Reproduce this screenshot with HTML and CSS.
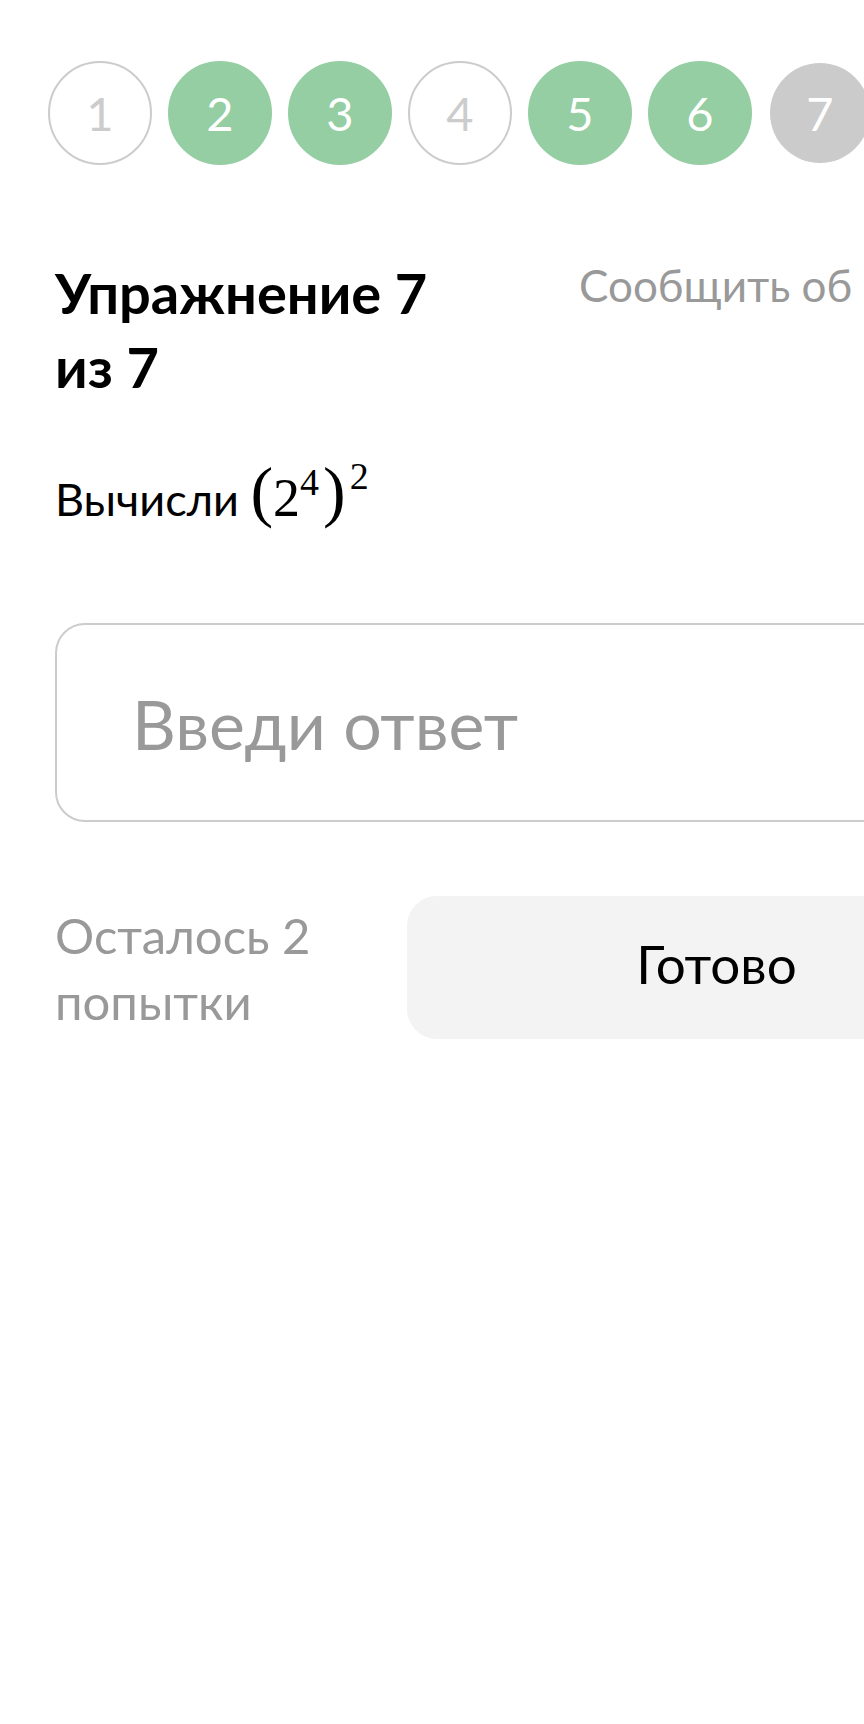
FILE: index.html
```html
<!DOCTYPE html>
<html lang="ru">
<head>
<meta charset="utf-8">
<title>Упражнение 7 из 7</title>
<link rel="stylesheet" href="styles.css">
</head>
<body>
<div class="viewport">
  <main class="page">
    <ol class="steps">
      <li class="step">1</li>
      <li class="step step--done">2</li>
      <li class="step step--done">3</li>
      <li class="step">4</li>
      <li class="step step--done">5</li>
      <li class="step step--done">6</li>
      <li class="step step--current">7</li>
    </ol>
    <header class="exercise-head">
      <h1 class="exercise-title">Упражнение 7 из 7</h1>
      <a class="report-link" href="#">Сообщить об ошибке</a>
    </header>
    <p class="task">Вычисли <span class="math"><span class="paren">(</span><span class="mn">2</span><span class="sup">4</span><span class="paren">)</span><span class="sup sup--outer">2</span></span></p>
    <input class="answer" type="text" placeholder="Введи ответ">
    <div class="actions">
      <p class="attempts">Осталось 2 попытки</p>
      <button class="submit" type="button">Готово</button>
    </div>
  </main>
</div>
</body>
</html>
```

FILE: styles.css
```css
html, body {
  margin: 0;
  background: #fff;
}
body {
  font-family: Lato, "Open Sans", sans-serif;
  color: #000;
}
.viewport {
  width: 864px;
  min-height: 1724px;
  overflow: hidden;
}
.page {
  width: 971px;
  margin-left: 55px;
  padding-top: 61px;
}
.steps {
  list-style: none;
  margin: 0 0 0 -7px;
  padding: 0;
  display: flex;
  gap: 16px;
}
.step {
  box-sizing: border-box;
  flex: none;
  width: 104px;
  height: 104px;
  border-radius: 50%;
  border: 2px solid #cccccc;
  display: flex;
  align-items: center;
  justify-content: center;
  font-size: 47px;
  color: #cccccc;
}
.step--done {
  background: #94cea2;
  border-color: #94cea2;
  color: #fff;
}
.step--current {
  background: #cbcbcb;
  background-clip: padding-box;
  border-color: transparent;
  color: #fff;
}
.exercise-head {
  display: grid;
  grid-template-columns: 440px max-content;
  column-gap: 84px;
  align-items: start;
  margin-top: 91px;
}
.exercise-title {
  margin: 0;
  font-size: 56px;
  font-weight: 700;
  line-height: 74px;
}
.report-link {
  font-size: 44px;
  line-height: 58px;
  color: #999;
  text-decoration: none;
  white-space: nowrap;
}
.task {
  margin: 65px 0 0;
  font-size: 45px;
  line-height: 60px;
}
.math {
  font-family: "Liberation Serif", serif;
  line-height: 0;
}
.mn {
  font-size: 54px;
}
.paren {
  font-size: 68px;
  vertical-align: 2px;
}
.sup {
  font-size: 38px;
  vertical-align: 21px;
  margin-right: 4px;
}
.sup--outer {
  vertical-align: 27px;
  margin-left: 4px;
}
.answer {
  display: block;
  box-sizing: border-box;
  width: 100%;
  height: 199px;
  margin: 94px 0 0;
  border: 2px solid #cccccc;
  border-radius: 30px;
  padding: 2px 0 0 75px;
  font: 400 68px Lato, "Open Sans", sans-serif;
  color: #000;
  background: #fff;
  outline: none;
}
.answer::placeholder {
  color: #999;
  opacity: 1;
}
.actions {
  display: flex;
  align-items: flex-start;
  gap: 32px;
  margin-top: 74px;
}
.attempts {
  flex: 0 0 320px;
  margin: 6px 0 0;
  font-size: 49px;
  line-height: 66px;
  color: #999;
}
.submit {
  flex: none;
  width: 619px;
  height: 143px;
  border: 0;
  border-radius: 30px;
  background: #f3f3f3;
  padding: 0 0 8px;
  font: 400 53px Lato, "Open Sans", sans-serif;
  color: #000;
}
```
